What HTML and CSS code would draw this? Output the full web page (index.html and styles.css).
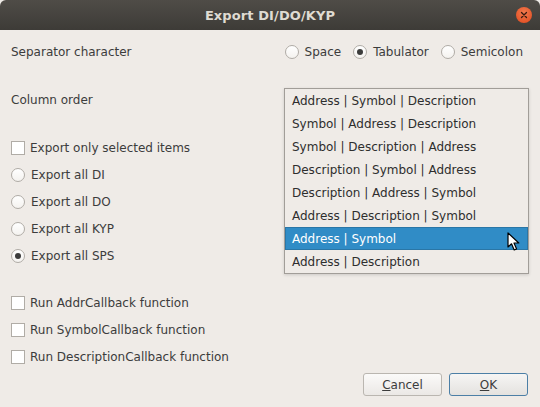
FILE: index.html
```html
<!DOCTYPE html>
<html>
<head>
<meta charset="utf-8">
<link rel="stylesheet" href="styles.css">
</head>
<body>
<div class="window">
  <div class="titlebar">
    <span class="title">Export DI/DO/KYP</span>
    <span class="close"><svg width="16" height="16" viewBox="0 0 16 16"><path d="M5.5 5.5 L10.5 10.5 M10.5 5.5 L5.5 10.5" stroke="#3a1a10" stroke-width="1.3" stroke-linecap="round"/></svg></span>
  </div>
  <div class="content">
    <div class="row sep-row">
      <span class="label">Separator character</span>
      <div class="radios">
        <span class="opt"><span class="radio"></span>Space</span>
        <span class="opt"><span class="radio checked"></span>Tabulator</span>
        <span class="opt"><span class="radio"></span>Semicolon</span>
      </div>
    </div>
    <div class="row col-row">
      <span class="label">Column order</span>
    </div>
    <div class="group first">
      <div class="item"><span class="check"></span>Export only selected items</div>
      <div class="item"><span class="radio"></span>Export all DI</div>
      <div class="item"><span class="radio"></span>Export all DO</div>
      <div class="item"><span class="radio"></span>Export all KYP</div>
      <div class="item"><span class="radio checked"></span>Export all SPS</div>
    </div>
    <div class="group second">
      <div class="item"><span class="check"></span>Run AddrCallback function</div>
      <div class="item"><span class="check"></span>Run SymbolCallback function</div>
      <div class="item"><span class="check"></span>Run DescriptionCallback function</div>
    </div>
    <div class="buttons">
      <button class="btn"><u>C</u>ancel</button>
      <button class="btn ok"><u>O</u>K</button>
    </div>
  </div>
  <ul class="popup">
    <li>Address | Symbol | Description</li>
    <li>Symbol | Address | Description</li>
    <li>Symbol | Description | Address</li>
    <li>Description | Symbol | Address</li>
    <li>Description | Address | Symbol</li>
    <li>Address | Description | Symbol</li>
    <li class="sel">Address | Symbol</li>
    <li>Address | Description</li>
  </ul>
  <svg class="cursor" width="14" height="20" viewBox="0 0 14 20"><path d="M1 1 L1 15 L4.5 11.8 L7.2 18 L9.6 17 L7 11 L11.8 11 Z" fill="#ffffff" stroke="#000" stroke-width="1.2" stroke-linejoin="round"/></svg>
</div>
</body>
</html>
```
FILE: styles.css
```css
* { box-sizing: border-box; }
html, body { margin: 0; padding: 0; }
body {
  width: 540px;
  height: 407px;
  overflow: hidden;
  background: #efebe7;
  font-family: "DejaVu Sans", "Liberation Sans", sans-serif;
  font-size: 12px;
  color: #3c3c3c;
}
.window { position: relative; width: 540px; height: 407px; }
.titlebar {
  height: 30px;
  background: linear-gradient(#4f4c47, #3d3b37);
  border-radius: 6px 6px 0 0;
  display: flex;
  align-items: center;
  justify-content: center;
  position: relative;
}
.title {
  font-weight: bold;
  font-size: 13px;
  color: #dfdbd2;
  letter-spacing: 0.1px;
}
.close {
  position: absolute;
  right: 8px;
  top: 7px;
  width: 16px;
  height: 16px;
  border-radius: 50%;
  background: radial-gradient(circle at 50% 35%, #f27a4e, #e0481c);
  display: flex;
}
.content { padding: 0 12px 0 11px; }
.row { display: flex; align-items: center; height: 26px; }
.sep-row { margin-top: 9px; justify-content: space-between; }
.col-row { margin-top: 22px; }
.radios { display: flex; gap: 12px; padding-right: 5px; }
.opt { display: flex; align-items: center; }
.radio {
  width: 14px;
  height: 14px;
  border-radius: 50%;
  border: 1px solid #b0aca6;
  background: linear-gradient(#ffffff, #f4f2ef);
  display: inline-flex;
  align-items: center;
  justify-content: center;
  margin-right: 6px;
  flex: none;
}
.radio.checked::after {
  content: "";
  width: 6px;
  height: 6px;
  border-radius: 50%;
  background: #3c3c3c;
}
.check {
  width: 14px;
  height: 14px;
  border: 1px solid #b0aca6;
  background: #ffffff;
  margin-right: 5px;
  flex: none;
}
.group { display: flex; flex-direction: column; }
.group.first { margin-top: 21px; }
.group.second { margin-top: 20px; }
.item { display: flex; align-items: center; height: 27px; }
.buttons {
  display: flex;
  justify-content: flex-end;
  gap: 7px;
  margin-top: 3px;
}
.btn {
  width: 79px;
  height: 23px;
  font-family: inherit;
  font-size: 12px;
  color: #3c3c3c;
  border: 1px solid #bab6b0;
  border-radius: 3px;
  background: linear-gradient(#fbfaf9, #ebe8e5);
  padding: 0;
}
.btn.ok {
  border-color: #4c7fa6;
  background: linear-gradient(#f6f5f4, #e4e2df);
}
.popup {
  position: absolute;
  left: 284px;
  top: 88px;
  width: 245px;
  margin: 0;
  padding: 0;
  list-style: none;
  border: 1px solid #a19d98;
  background: #efebe7;
  box-shadow: 0 1px 3px rgba(0,0,0,0.15);
}
.popup li {
  height: 23px;
  line-height: 24px;
  padding-left: 7px;
  color: #2e2e2e;
}
.popup li.sel {
  background: #308cc6;
  color: #ffffff;
  box-shadow: inset 0 0 0 1px #2a76a6;
}
.cursor { position: absolute; left: 507px; top: 232px; }
```
